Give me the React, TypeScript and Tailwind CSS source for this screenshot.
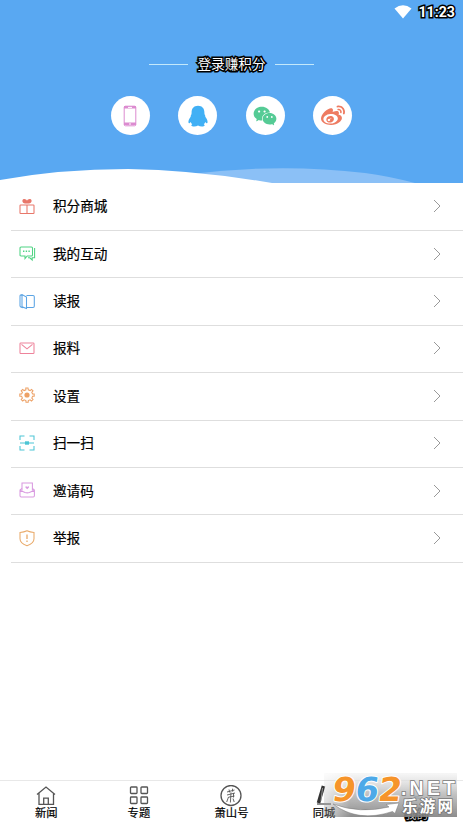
import type { ReactNode } from "react";
import { AiFillWechat } from "react-icons/ai";
import { FaWeibo } from "react-icons/fa";

const logins = [
  {
    name: "phone",
    icon: (
      <svg width="14" height="22" viewBox="0 0 14 22" fill="none">
        <rect x="1.2" y="1.2" width="11.6" height="19.6" rx="1.2" stroke="#dc8bd0" strokeWidth="1" />
        <path d="M1 2.3h12M1 18.8h12" stroke="#dc8bd0" strokeWidth="2.6" />
        <path d="M5 2.4h4M6 19h2" stroke="#fff" strokeWidth="1" />
      </svg>
    ),
  },
  {
    name: "qq",
    icon: (
      <svg width="20" height="22" viewBox="0 0 20 22" fill="#41b0f5">
        <path d="M10 .8c4.2 0 6.4 2.8 6.4 6.7l.1 1.7c.9 1.2.8 1.8.8 2.6 1.500 1.900 2.600 4.300 2.200 6-.5.9-1.400 0-2.200-.9-.3 1-.8 1.700-1.500 2.400 1.500.8 1.200 2-.8 2.100-2 .2-3.700-.1-5-.9-1.300.8-3 1.100-5 .9-2-.1-2.300-1.300-.8-2.100-.7-.7-1.200-1.400-1.500-2.400-.8.9-1.700 1.800-2.200.9-.4-1.700.7-4.100 2.200-6 0-.8-.1-1.400.8-2.600l.1-1.700C3.600 3.600 5.800.8 10 .8z" />
      </svg>
    ),
  },
  { name: "wechat", icon: <AiFillWechat size={26} className="text-[#55cb95]" /> },
  { name: "weibo", icon: <FaWeibo size={24} className="text-[#ee7b61]" /> },
];

const menu: { label: string; color: string; icon: ReactNode }[] = [
  {
    label: "积分商城",
    color: "text-[#e8776a]",
    icon: (
      <>
        <rect x="1" y="7" width="14" height="8.5" rx="0.6" />
        <path d="M8 7v8.5" />
        <path
          d="M8 5.6C5.800 5.800 3 4.600 3.400 2.400 4.200 0 7.400.8 8 2.800c.6-2 3.800-2.800 4.600-.4.4 2.200-2.400 3.400-4.600 3.200z"
          fill="currentColor"
          stroke="none"
        />
      </>
    ),
  },
  {
    label: "我的互动",
    color: "text-[#4fd383]",
    icon: (
      <>
        <path d="M2 2h10.5q1 0 1 1v7q0 1-1 1H8.2L6 13.6V11H2q-1 0-1-1V3q0-1 1-1z" />
        <path d="M15.6 3v9.8h-2.4V15l-2.4-2.2H9" />
        <path d="M4 6.3h1.4M6.7 6.3h1.4M9.4 6.3h1.4" strokeWidth="1.5" />
      </>
    ),
  },
  {
    label: "读报",
    color: "text-[#5ba4e4]",
    icon: (
      <>
        <path d="M1 2.2 3 1.5 7.5 4v11.5L3 13.8V1.5M1 2.2v10.6q0 1.2 1.2 1.4l2 .6" />
        <path d="M7.5 2.5H14q1.3 0 1.3 1.3v9.4q0 1.3-1.3 1.3H7.500" />
      </>
    ),
  },
  {
    label: "报料",
    color: "text-[#ee839b]",
    icon: (
      <>
        <rect x="1" y="3" width="14" height="10.5" rx="0.8" />
        <path d="M2.5 4.300 8 8.800l5.500-4.500" />
      </>
    ),
  },
  {
    label: "设置",
    color: "text-[#eda166]",
    icon: (
      <>
        <path d="m6.8 1 .1 1.8-1.8.8-1.4-1.2-1.5 1.5 1.2 1.4-.8 1.600-1.800.1v2.200l1.800.1.8 1.800-1.200 1.400 1.500 1.500 1.400-1.200 1.800.8.1 1.600h2.200l.1-1.600 1.800-.8 1.400 1.200 1.500-1.500-1.200-1.400.8-1.800 1.600-.1V7l-1.600-.1-.8-1.600L14 3.900l-1.500-1.500-1.400 1.200-1.800-.8L9 1z" />
        <circle cx="8" cy="8" r="2.6" fill="currentColor" stroke="none" />
      </>
    ),
  },
  {
    label: "扫一扫",
    color: "text-[#4cc5d5]",
    icon: (
      <>
        <path d="M1 5V1h4.5M10.5 1H15v4M15 11v4h-4.500M5.500 15H1v-4M1 8h14" />
        <rect x="6" y="6.3" width="4" height="3.4" fill="currentColor" stroke="none" />
      </>
    ),
  },
  {
    label: "邀请码",
    color: "text-[#d99ae0]",
    icon: (
      <>
        <path d="M3 8.5V1h10.4v7.5" />
        <path d="M3 6.3 1 8v5.8q0 1.200 1.200 1.200h12q1.200 0 1.200-1.200V8l-2-1.700M1 8.200l5 2.300q2.200.8 4.400 0l5-2.300" />
        <path d="M8.2 7.300 6.400 5.600q-.3-1.300.9-1.300l.9.6.9-.6q1.200 0 .9 1.300z" fill="currentColor" stroke="none" />
      </>
    ),
  },
  {
    label: "举报",
    color: "text-[#e9aa6a]",
    icon: (
      <>
        <path d="M1 2.4Q5 2.300 8 .8q3 1.500 7 1.600v6.400q0 4.500-7 7-7-2.500-7-7z" />
        <path d="M8 4.5v4.600M8 10.500V12" strokeWidth="1.3" />
      </>
    ),
  },
];

const tabs: { label: string; active?: boolean; icon: ReactNode }[] = [
  {
    label: "新闻",
    icon: <path d="M2 9.5 11 2l9 7.500M4 8v11.300h14.500V8M8.700 19v-5.800h4.600V19" />,
  },
  {
    label: "专题",
    icon: (
      <>
        <rect x="2.5" y="2" width="6.5" height="6.5" rx="0.8" />
        <rect x="13" y="2" width="6.5" height="6.5" rx="0.8" />
        <rect x="2.5" y="12" width="6.5" height="6.5" rx="0.8" />
        <rect x="13" y="12" width="6.5" height="6.5" rx="0.8" />
      </>
    ),
  },
  {
    label: "萧山号",
    icon: (
      <>
        <circle cx="11" cy="10.500" r="10" />
        <path
          d="m7 7 7.500-2M9 4.500l.8 3M12.500 3.700l.2 3M7 10l8-2M8.500 12.200l6-1.200M11 7.500l-.6 10M13.500 8v4.500M8.500 12l-1.800 5M13 13.500l1.200 3.500"
          strokeWidth="0.9"
        />
      </>
    ),
  },
  {
    label: "同城",
    icon: (
      <>
        <path d="M10.500 1 7.500 11 5.500 18" stroke="#333" strokeWidth="3.6" />
        <path d="M9.500 3 8 16" stroke="#aaa" strokeWidth="0.8" />
        <path d="M4 19h14" />
      </>
    ),
  },
  {
    label: "我的",
    active: true,
    icon: (
      <g stroke="#59809c">
        <circle cx="11" cy="7" r="4.5" />
        <path d="M2.500 20q1-7 8.500-7t8.500 7" />
      </g>
    ),
  },
];

function Header() {
  return (
    <header className="relative h-[183px] shrink-0 bg-[#59a8f2]">
      <div className="flex h-6 items-center justify-end pr-2">
        <svg width="18" height="14" viewBox="0 0 18 14" className="mr-[6px]">
          <path d="M.5 3.500Q9-3 17.500 3.500L9 13.500z" fill="#fff" />
        </svg>
        <span className="font-['Roboto',sans-serif] text-[14.2px] font-bold leading-6 text-white [paint-order:stroke_fill] [-webkit-text-stroke:3px_#000]">
          11:23
        </span>
      </div>

      <div className="mt-[29px] flex h-[22px] items-center justify-center gap-[10px]">
        <span className="h-px w-[39px] bg-[#c3e8fb]" />
        <span className="text-[13.6px] leading-[22px] text-white [paint-order:stroke_fill] [-webkit-text-stroke:3px_#000]">
          登录赚积分
        </span>
        <span className="h-px w-[39px] bg-[#c3e8fb]" />
      </div>

      <div className="mt-[21px] flex justify-center gap-[28.5px]">
        {logins.map((login) => (
          <button
            key={login.name}
            aria-label={login.name}
            className="flex h-[39px] w-[39px] items-center justify-center rounded-full bg-white"
          >
            {login.icon}
          </button>
        ))}
      </div>

      {/* Wave */}
      <svg
        className="absolute bottom-0 left-0 w-full"
        height="16"
        viewBox="0 0 463 16"
        preserveAspectRatio="none"
      >
        <path d="M190 7Q280-4 365 6 388 9 415 16H190z" fill="#8bc0f6" />
        <path d="M0 13Q60 2 128 2 195 3 272 16H0z" fill="#fff" />
      </svg>
    </header>
  );
}

function Watermark() {
  return (
    <svg
      className="absolute bottom-[6px] right-[6px] overflow-visible"
      width="133"
      height="44"
      viewBox="0 0 133 44"
    >
      <defs>
        <linearGradient id="shade" x1="0" y1="0" x2="0" y2="1">
          <stop offset="0" stopColor="#eee" stopOpacity="0.5" />
          <stop offset="0.45" stopColor="#bbb" stopOpacity="0.85" />
          <stop offset="1" stopColor="#808080" stopOpacity="0.9" />
        </linearGradient>
        <linearGradient id="fade" x1="0" y1="0" x2="1" y2="0">
          <stop offset="0" stopColor="#fff" stopOpacity="0.35" />
          <stop offset="0.2" stopColor="#fff" />
        </linearGradient>
        <mask id="edge">
          <rect width="133" height="44" fill="url(#fade)" />
        </mask>
      </defs>
      <rect width="133" height="44" fill="url(#shade)" mask="url(#edge)" />
      <path
        d="M9 31Q36 41 65 34l-3-2.500L75 30l-4 10.500-2.500-2Q34 50 9 31z"
        fill="#fff"
        stroke="#777"
        strokeWidth="0.5"
      />
      <g
        transform="skewX(-8)"
        fontFamily="DejaVu Sans, sans-serif"
        fontSize="33"
        fontWeight="bold"
        paintOrder="stroke"
        stroke="#fff"
        strokeLinejoin="round"
        strokeWidth="2"
      >
        <text x="11" y="28" textLength="23.500" lengthAdjust="spacingAndGlyphs" fill="#f6942a">9</text>
        <text x="34" y="28" textLength="23.500" lengthAdjust="spacingAndGlyphs" fill="#4da9e8">6</text>
        <text x="57" y="28" textLength="23.500" lengthAdjust="spacingAndGlyphs" fill="#f6942a">2</text>
      </g>
      <g fontWeight="bold" paintOrder="stroke" stroke="#777" strokeWidth="1.5" fill="#fff">
        <text x="77" y="21.5" fontFamily="Liberation Sans, sans-serif" fontSize="19.500" textLength="54">
          .NET
        </text>
        <text x="78" y="38.5" fontFamily="Noto Sans CJK SC, sans-serif" fontSize="15.500" textLength="51">
          乐游网
        </text>
      </g>
    </svg>
  );
}

export default function App() {
  return (
    <div className="relative flex h-[823px] w-full flex-col overflow-hidden bg-white font-['Roboto','Noto_Sans_CJK_SC',sans-serif] text-black">
      <Header />

      <main className="flex-1 pt-[0.6px]">
        {menu.map((item) => (
          <button
            key={item.label}
            className="ml-[11px] flex h-[47.4px] w-[452px] items-center border-b border-[#dedede] pb-px text-left"
          >
            <svg
              width="17"
              height="17"
              viewBox="0 0 17 17"
              fill="none"
              stroke="currentColor"
              strokeWidth="1.05"
              className={`ml-2 ${item.color}`}
            >
              {item.icon}
            </svg>
            <span className="ml-[17px] flex-1 text-[13.6px] leading-5 [-webkit-text-stroke:0.2px_#000]">
              {item.label}
            </span>
            <svg width="8" height="14" viewBox="0 0 8 14" fill="none" stroke="#999" className="mr-[22px]">
              <path d="m1 1 6 6-6 6" />
            </svg>
          </button>
        ))}
      </main>

      <nav className="flex h-[43px] shrink-0 border-t border-[#e8e8e8]">
        {tabs.map((tab) => (
          <button key={tab.label} className="flex flex-1 flex-col items-center pt-1">
            <svg width="22" height="22" viewBox="0 0 22 22" fill="none" stroke="#555" strokeWidth="1.3">
              {tab.icon}
            </svg>
            <span
              className={`text-[11.3px] leading-[14px] ${
                tab.active
                  ? "pt-0.5 text-[#ccc] [paint-order:stroke_fill] [-webkit-text-stroke:3px_#000]"
                  : "[-webkit-text-stroke:0.2px_#000]"
              }`}
            >
              {tab.label}
            </span>
          </button>
        ))}
      </nav>

      <Watermark />
    </div>
  );
}
